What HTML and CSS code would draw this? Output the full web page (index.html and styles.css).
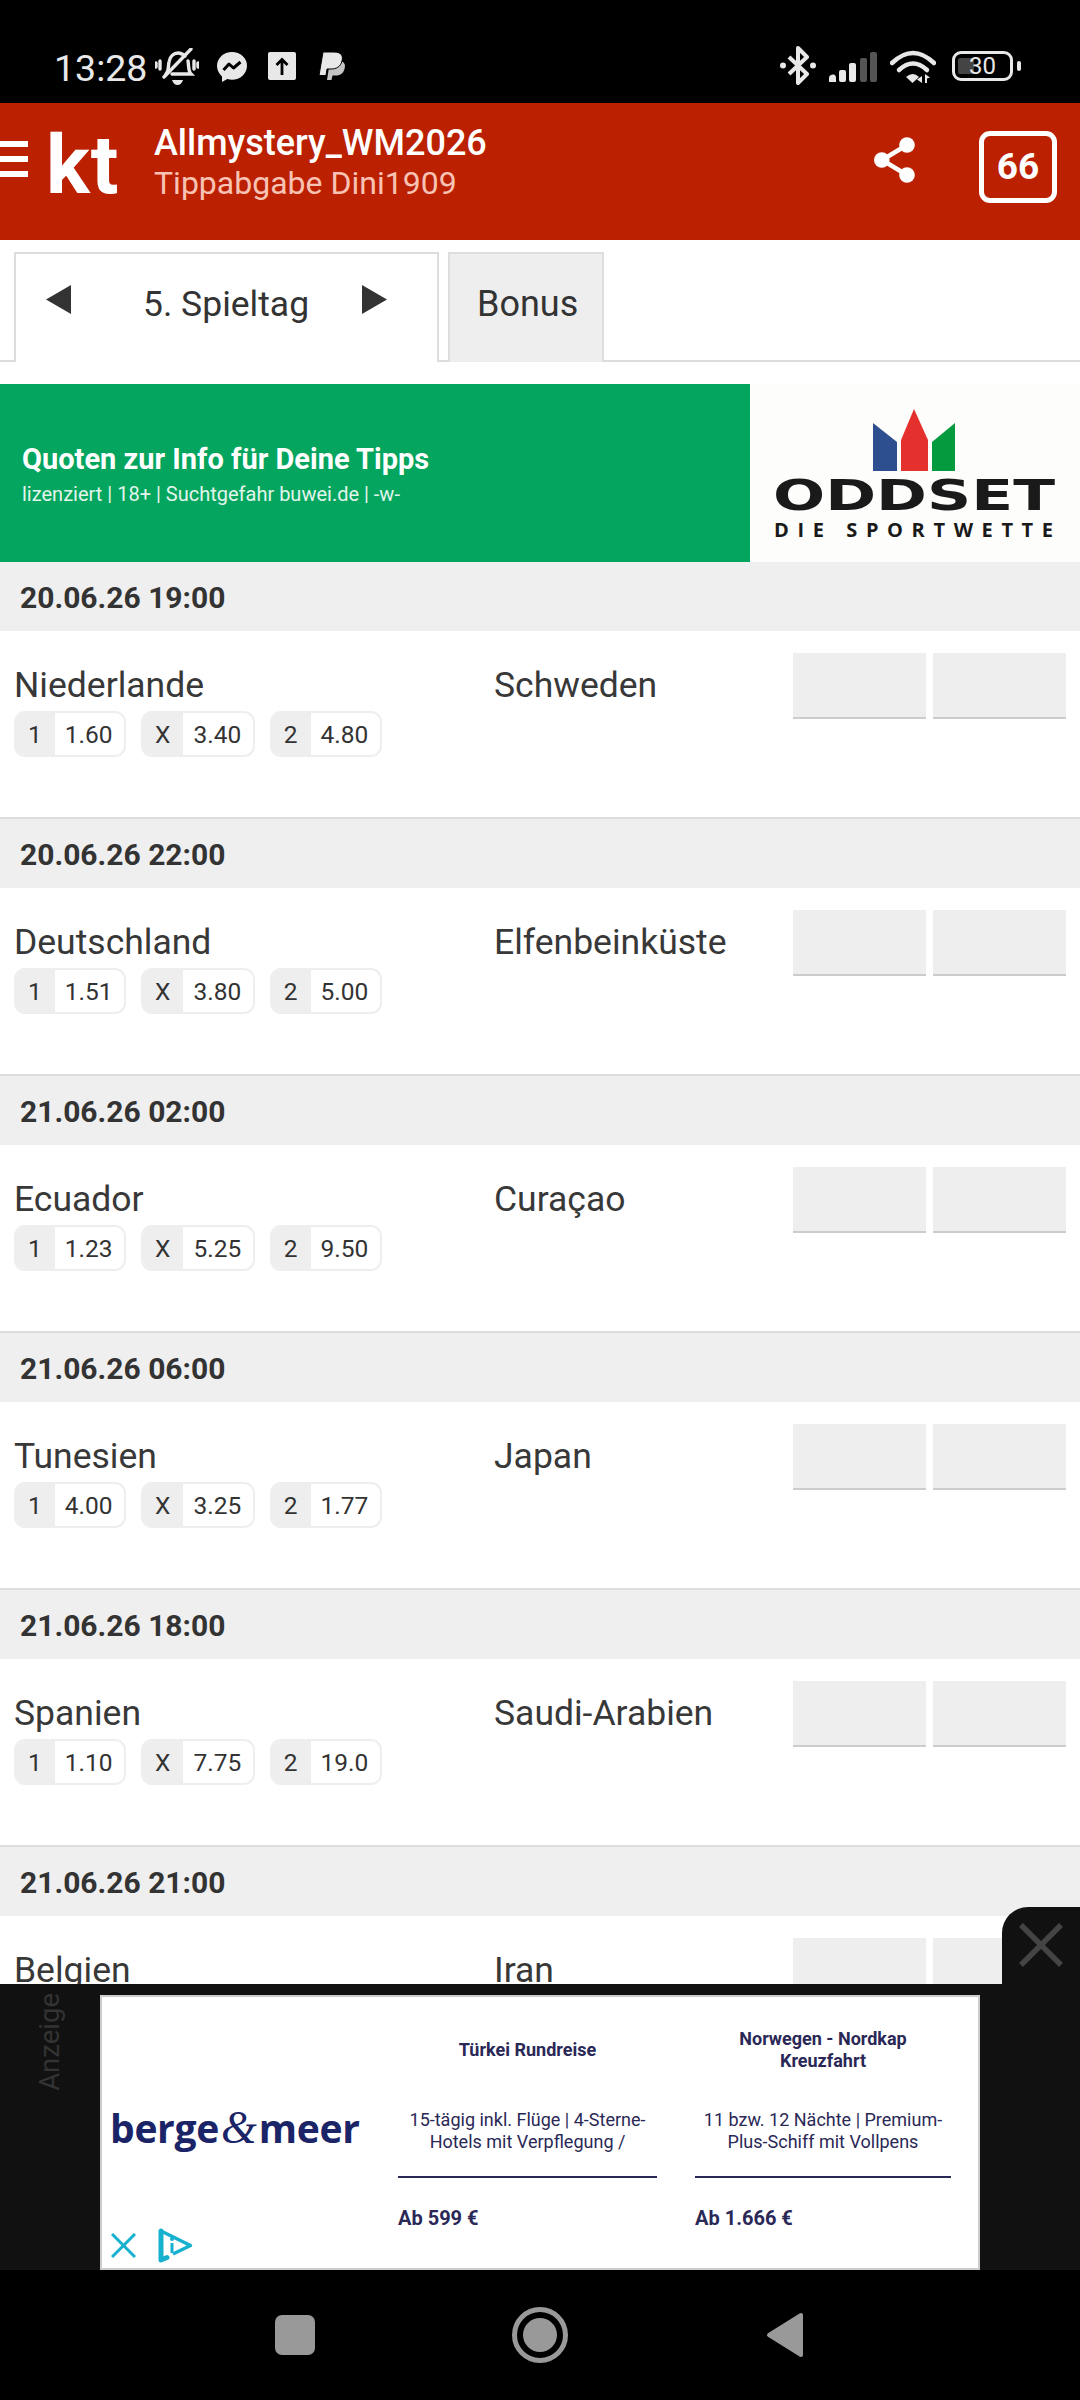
FILE: index.html
```html
<!DOCTYPE html>
<html lang="de">
<head>
<meta charset="utf-8">
<title>Tippabgabe</title>
<link rel="stylesheet" href="styles.css">
</head>
<body>
<div class="statusbar">
  <span class="clock">13:28</span>
  <svg class="ic-bell" viewBox="0 0 44 37" width="44" height="37"><g fill="none" stroke="#e8e8e8" stroke-width="3.4" stroke-linecap="round"><path d="M11 26c3-3 2-7 3-12 1-6 5-9 9-9 3 0 5 1 7 3"/><path d="M33 13c1 5 0 10 3 13H17"/><path d="M9 29 36 1"/><path d="M5 13v8M1 15v4M39 13v8M43 15v4"/></g><path d="M17 32h11c-1 3-3 5-5.500 5S18 35 17 32z" fill="#e8e8e8"/></svg>
  <svg class="ic-msg" viewBox="0 0 30 30" width="30" height="30"><path d="M15 0C6.700 0 0 6.200 0 14c0 4.200 2 7.900 5 10.400V30l5.300-3c1.500.5 3 .7 4.700.7 8.300 0 15-6.200 15-14S23.300 0 15 0z" fill="#e8e8e8"/><path d="M6.500 18 12 12l4.500 4L23.500 10" fill="none" stroke="#000" stroke-width="3" stroke-linejoin="round"/></svg>
  <svg class="ic-up" viewBox="0 0 28 28" width="28" height="28"><rect width="28" height="28" rx="2" fill="#e8e8e8"/><path d="M14 23V8M8.500 13 14 7.500l5.500 5.500" fill="none" stroke="#000" stroke-width="2.800"/></svg>
  <svg class="ic-pp" viewBox="0 0 26 29" width="26" height="29"><path d="M8 28 11 9h8c6 0 8 3 6.500 8-1.500 5-5 6.500-9 6.500h-3L12.500 28z" fill="#c4c4c4"/><path d="M0 23.500 4 0h11c7 0 9.500 3.500 8 9-1.500 6-6 8-11 8H8L7 23.500z" fill="#e8e8e8" stroke="#000" stroke-width="1"/></svg>
  <div class="status-right">
    <svg class="ic-bt" viewBox="0 0 36 39" width="36" height="39"><path d="M9 11 27 28 18 37V2l9 9L9 28" fill="none" stroke="#e8e8e8" stroke-width="4" stroke-linejoin="round"/><circle cx="3" cy="19.500" r="3" fill="#e8e8e8"/><circle cx="33" cy="19.500" r="3" fill="#e8e8e8"/></svg>
    <svg class="ic-sig" viewBox="0 0 48 30" width="48" height="30"><g fill="#e8e8e8"><path d="M0 30v-4q0-3 3.500-3.500T7 26v4z"/><rect x="10" y="18" width="7" height="12" rx="2"/><rect x="20" y="11" width="7" height="19" rx="2"/></g><g fill="#555"><rect x="31" y="6" width="7" height="24" rx="2"/><rect x="41" y="0" width="7" height="30" rx="2"/></g></svg>
    <svg class="ic-wifi" viewBox="0 0 46 33" width="46" height="33"><g fill="none" stroke="#e8e8e8" stroke-width="4.500" stroke-linecap="round"><path d="M2 13Q23-7 44 13"/><path d="M9 20Q23 7 37 20"/></g><path d="M16 27q7-6 13 0l-6.500 6z" fill="#e8e8e8"/><path d="M32 33v-7l-5 3.500zM35 33v-9l5 3.500-3 1v4.500z" fill="#e8e8e8"/></svg>
    <div class="battery"><span class="battery-fill"></span><span class="battery-num">30</span></div>
    <span class="battery-nub"></span>
  </div>
</div>

<div class="main">
  <header class="appbar">
    <div class="burger"><i></i><i></i><i></i></div>
    <div class="logo">kt</div>
    <div class="titles">
      <div class="title">Allmystery_WM2026</div>
      <div class="subtitle">Tippabgabe Dini1909</div>
    </div>
    <svg class="share" viewBox="0 0 41 46" width="41" height="46"><path d="M33 8 8 23l25 15" fill="none" stroke="#fff" stroke-width="4.500"/><circle cx="33" cy="8" r="7.800" fill="#fff"/><circle cx="7.800" cy="23" r="7.800" fill="#fff"/><circle cx="33" cy="38" r="7.800" fill="#fff"/></svg>
    <div class="badge">66</div>
  </header>

  <nav class="tabs">
    <div class="tab tab-active">
      <svg class="arrow-l" viewBox="0 0 25 29" width="25" height="29"><path d="M25 0v29L0 14.500z" fill="#333"/></svg>
      <span>5. Spieltag</span>
      <svg class="arrow-r" viewBox="0 0 25 29" width="25" height="29"><path d="M0 0v29l25-14.500z" fill="#333"/></svg>
    </div>
    <div class="tab tab-other">Bonus</div>
  </nav>

  <section class="promo">
    <div class="promo-text">
      <div class="promo-head">Quoten zur Info für Deine Tipps</div>
      <div class="promo-sub">lizenziert | 18+ | Suchtgefahr buwei.de | -w-</div>
    </div>
    <svg class="promo-logo" viewBox="0 0 330 178" width="330" height="178">
      <path d="M123 39 147 58v29H123z" fill="#2d4f8f"/>
      <path d="M164 25 178 56v31H151V56z" fill="#e4312d"/>
      <path d="M205 39 182 58v29h23z" fill="#049a3e"/>
      <text class="odd-big" x="23" y="126" textLength="282" lengthAdjust="spacingAndGlyphs">ODDSET</text>
      <text class="odd-small" x="24" y="153" textLength="279" lengthAdjust="spacing">DIE SPORTWETTE</text>
    </svg>
  </section>

  <div class="date">20.06.26 19:00</div>
  <div class="match">
    <div class="home"><div class="team">Niederlande</div>
      <div class="odds"><div class="odd"><b>1</b><span>1.60</span></div><div class="odd"><b>X</b><span>3.40</span></div><div class="odd"><b>2</b><span>4.80</span></div></div></div>
    <div class="away team">Schweden</div>
    <div class="inputs"><div class="inp"></div><div class="inp"></div></div>
  </div>
  <div class="date">20.06.26 22:00</div>
  <div class="match">
    <div class="home"><div class="team">Deutschland</div>
      <div class="odds"><div class="odd"><b>1</b><span>1.51</span></div><div class="odd"><b>X</b><span>3.80</span></div><div class="odd"><b>2</b><span>5.00</span></div></div></div>
    <div class="away team">Elfenbeinküste</div>
    <div class="inputs"><div class="inp"></div><div class="inp"></div></div>
  </div>
  <div class="date">21.06.26 02:00</div>
  <div class="match">
    <div class="home"><div class="team">Ecuador</div>
      <div class="odds"><div class="odd"><b>1</b><span>1.23</span></div><div class="odd"><b>X</b><span>5.25</span></div><div class="odd"><b>2</b><span>9.50</span></div></div></div>
    <div class="away team">Curaçao</div>
    <div class="inputs"><div class="inp"></div><div class="inp"></div></div>
  </div>
  <div class="date">21.06.26 06:00</div>
  <div class="match">
    <div class="home"><div class="team">Tunesien</div>
      <div class="odds"><div class="odd"><b>1</b><span>4.00</span></div><div class="odd"><b>X</b><span>3.25</span></div><div class="odd"><b>2</b><span>1.77</span></div></div></div>
    <div class="away team">Japan</div>
    <div class="inputs"><div class="inp"></div><div class="inp"></div></div>
  </div>
  <div class="date">21.06.26 18:00</div>
  <div class="match">
    <div class="home"><div class="team">Spanien</div>
      <div class="odds"><div class="odd"><b>1</b><span>1.10</span></div><div class="odd"><b>X</b><span>7.75</span></div><div class="odd"><b>2</b><span>19.0</span></div></div></div>
    <div class="away team">Saudi-Arabien</div>
    <div class="inputs"><div class="inp"></div><div class="inp"></div></div>
  </div>
  <div class="date">21.06.26 21:00</div>
  <div class="match">
    <div class="home"><div class="team">Belgien</div></div>
    <div class="away team">Iran</div>
    <div class="inputs"><div class="inp"></div><div class="inp"></div></div>
  </div>

  <aside class="dock">
    <div class="dock-close"><svg viewBox="0 0 44 44" width="44" height="44"><path d="M2 2 42 42M42 2 2 42" stroke="#444" stroke-width="5.500"/></svg></div>
    <div class="dock-label"><span>Anzeige</span></div>
    <div class="adbox">
      <div class="ad-logo"><span class="bm">berge</span><span class="bm-amp">&amp;</span><span class="bm">meer</span></div>
      <div class="ad-col">
        <div class="ad-title">Türkei Rundreise</div>
        <div class="ad-desc">15-tägig inkl. Flüge | 4-Sterne-<br>Hotels mit Verpflegung /</div>
        <div class="ad-rule"></div>
        <div class="ad-price">Ab 599 €</div>
      </div>
      <div class="ad-col ad-col-last">
        <div class="ad-title">Norwegen - Nordkap<br>Kreuzfahrt</div>
        <div class="ad-desc">11 bzw. 12 Nächte | Premium-<br>Plus-Schiff mit Vollpens</div>
        <div class="ad-rule"></div>
        <div class="ad-price">Ab 1.666 €</div>
      </div>
      <div class="ad-choices">
        <svg viewBox="0 0 25 25" width="25" height="25"><path d="M1 1 24 24M24 1 1 24" stroke="#17b1d0" stroke-width="3"/></svg>
        <svg viewBox="0 0 35 35" width="35" height="35"><path d="M3 3 32.500 17.500 15 26" fill="none" stroke="#17b1d0" stroke-width="3.500" stroke-linejoin="round"/><path d="M3 3V32l6-2.500" fill="none" stroke="#17b1d0" stroke-width="5" stroke-linejoin="round" stroke-linecap="round"/><path d="M14 15v10" stroke="#17b1d0" stroke-width="3"/><circle cx="14" cy="11" r="2" fill="#17b1d0"/></svg>
      </div>
    </div>
  </aside>
</div>

<footer class="navbar">
  <span class="nav-square"></span>
  <svg viewBox="0 0 56 56" width="56" height="56"><circle cx="28" cy="28" r="25.500" fill="none" stroke="#999" stroke-width="5"/><circle cx="28" cy="28" r="17" fill="#999"/></svg>
  <svg viewBox="0 0 38 46" width="40" height="46"><path d="M35 3v40L3 23z" fill="#999" stroke="#999" stroke-width="4" stroke-linejoin="round"/></svg>
</footer>
</body>
</html>
```

FILE: styles.css
```css
* { box-sizing: border-box; }
html, body { margin: 0; padding: 0; }
body {
  width: 1080px;
  height: 2400px;
  overflow: hidden;
  display: flex;
  flex-direction: column;
  background: #000;
  font-family: Roboto, "Liberation Sans", sans-serif;
  color: #333;
}

/* status bar */
.statusbar {
  height: 103px;
  flex: none;
  background: #000;
  display: flex;
  align-items: flex-start;
  padding-left: 54px;
  color: #e8e8e8;
}
.clock { font-size: 37.500px; line-height: 36px; margin-top: 50px; width: 101px; }
.ic-bell { margin-top: 48px; }
.ic-msg { margin: 52px 0 0 18px; }
.ic-up { margin: 52px 0 0 21px; }
.ic-pp { margin: 52px 0 0 23px; }
.status-right { margin-left: 435px; display: flex; align-items: flex-start; }
.ic-bt { margin-top: 46px; }
.ic-sig { margin: 52px 0 0 13px; }
.ic-wifi { margin: 50px 0 0 13px; }
.battery {
  position: relative;
  width: 61px;
  height: 30px;
  margin: 51px 0 0 16px;
  border: 3px solid #e8e8e8;
  border-radius: 9px;
  text-align: center;
  font-size: 24px;
  line-height: 25px;
  color: #e8e8e8;
}
.battery-fill { position: absolute; left: 3px; top: 4px; width: 16px; height: 16px; background: #444; border-radius: 2px; }
.battery-num { position: relative; }
.battery-nub { width: 4px; height: 10px; margin: 61px 0 0 4px; background: #e8e8e8; border-radius: 2px; }

/* main */
.main { position: relative; height: 2167px; flex: none; overflow: hidden; background: #fff; }

.appbar {
  height: 137px;
  background: #bb2000;
  display: flex;
  align-items: flex-start;
  color: #fff;
}
.burger { width: 28px; margin-top: 38px; display: flex; flex-direction: column; gap: 9px; }
.burger i { display: block; height: 6px; background: #fff; }
.logo { font-size: 82px; font-weight: 700; line-height: 80px; margin: 22px 0 0 18px; width: 108px; letter-spacing: 1px; }
.titles { width: 720px; margin-top: 20px; }
.title { font-size: 36px; font-weight: 500; line-height: 41px; }
.subtitle { font-size: 32px; line-height: 38px; color: #f8c2b4; }
.share { margin-top: 34px; }
.badge {
  width: 78px;
  height: 72px;
  margin: 28px 0 0 64px;
  border: 5px solid #fff;
  border-radius: 11px;
  font-size: 37px;
  font-weight: 700;
  line-height: 62px;
  text-align: center;
}

.tabs {
  height: 110px;
  margin-top: 12px;
  padding-left: 14px;
  display: flex;
  gap: 9px;
  border-bottom: 2px solid #ddd;
  font-size: 36px;
}
.tab { height: 110px; border: 2px solid #ddd; border-bottom: 0; display: flex; align-items: center; padding-bottom: 8px; }
.tab-active {
  width: 425px;
  background: #fff;
  padding-left: 30px;
  font-size: 35.500px;
}
.tab-active span { margin: 0 0 0 72px; width: 219px; }
.tab-other { width: 156px; background: #eee; padding-left: 27px; }
.arrow-l, .arrow-r { margin-top: -10px; }

.promo { height: 178px; margin-top: 22px; display: flex; background: #04a55e; }
.promo-text { width: 750px; padding: 56px 0 0 22px; color: #fff; }
.promo-head { font-size: 29px; font-weight: 700; line-height: 38px; }
.promo-sub { font-size: 20px; line-height: 32px; color: #e2f5ec; }
.promo-logo { background: #fdfdfb; }
.odd-big { font-family: "DejaVu Sans", sans-serif; font-weight: 700; font-size: 43px; fill: #1a1a1a; }
.odd-small { font-family: "Open Sans", sans-serif; font-weight: 700; font-size: 20px; fill: #1a1a1a; }

.date {
  height: 69px;
  background: #efefef;
  padding-left: 20px;
  font-size: 30px;
  font-weight: 700;
  line-height: 71px;
  color: #333;
}
.match {
  height: 188px;
  padding: 22px 0 0 14px;
  display: flex;
  align-items: flex-start;
  border-bottom: 2px solid #ddd;
  background: #fff;
}
.team { font-size: 35.500px; line-height: 42px; font-weight: 400; color: #383838; }
.home { width: 480px; padding-top: 11px; }
.away { width: 299px; height: 53px; padding-top: 11px; }
.odds { display: flex; gap: 15px; margin-top: 5px; }
.odd {
  height: 46px;
  display: flex;
  border: 2px solid #eee;
  border-radius: 11px;
  overflow: hidden;
  font-size: 24.500px;
  line-height: 44px;
}
.odd b { font-weight: 400; background: #eee; padding: 0 13px 0 12px; }
.odd span { padding: 0 11.500px 0 10px; }
.inputs { display: flex; gap: 7px; }
.inp { width: 133px; height: 66px; background: #eee; border-bottom: 2px solid #ccc; }

/* sticky ad */
.dock {
  position: absolute;
  left: 0;
  right: 0;
  bottom: 0;
  height: 286px;
  background: #111;
  display: flex;
  align-items: flex-start;
}
.dock-close {
  position: absolute;
  right: 0;
  top: -77px;
  width: 78px;
  height: 77px;
  background: #111;
  border-top-left-radius: 26px;
  padding: 16px 0 0 17px;
}
.dock-label { width: 100px; padding: 9px 0 0 36px; }
.dock-label span {
  display: block;
  writing-mode: vertical-rl;
  transform: rotate(180deg);
  font-size: 27.500px;
  line-height: 28px;
  color: #333;
}
.adbox {
  position: relative;
  width: 880px;
  height: 275px;
  margin-top: 11px;
  background: #fff;
  border: 2px solid #ccc;
  display: flex;
  color: #2a2856;
}
.ad-logo { flex: none; width: 296px; height: 170px; padding: 106px 0 0 8px; display: flex; align-items: baseline; color: #1a2466; white-space: nowrap; }
.bm { font-family: "Open Sans", sans-serif; font-weight: 700; font-size: 39px; line-height: 50px; letter-spacing: -0.3px; }
.bm-amp { font-family: "Liberation Serif", serif; font-style: italic; font-size: 46px; margin: 0 2px; line-height: 50px; }
.ad-col { flex: none; width: 259px; margin-right: 38px; font-size: 18px; text-align: center; }
.ad-col-last { width: 256px; margin-right: 0; }
.ad-title { height: 106px; display: flex; align-items: center; justify-content: center; font-weight: 700; line-height: 22px; font-size: 18px; }
.ad-desc { height: 50px; padding-top: 6px; line-height: 22px; white-space: nowrap; }
.ad-rule { height: 2px; margin-top: 23px; background: #2a2856; }
.ad-price { margin-top: 27px; line-height: 26px; font-size: 20px; font-weight: 700; text-align: left; }
.ad-choices { position: absolute; left: 9px; bottom: 5px; display: flex; align-items: center; gap: 22px; }

/* nav */
.navbar { height: 130px; flex: none; background: #000; display: flex; align-items: center; justify-content: center; gap: 197px; }
.nav-square { width: 40px; height: 40px; background: #999; border-radius: 7px; }
```
